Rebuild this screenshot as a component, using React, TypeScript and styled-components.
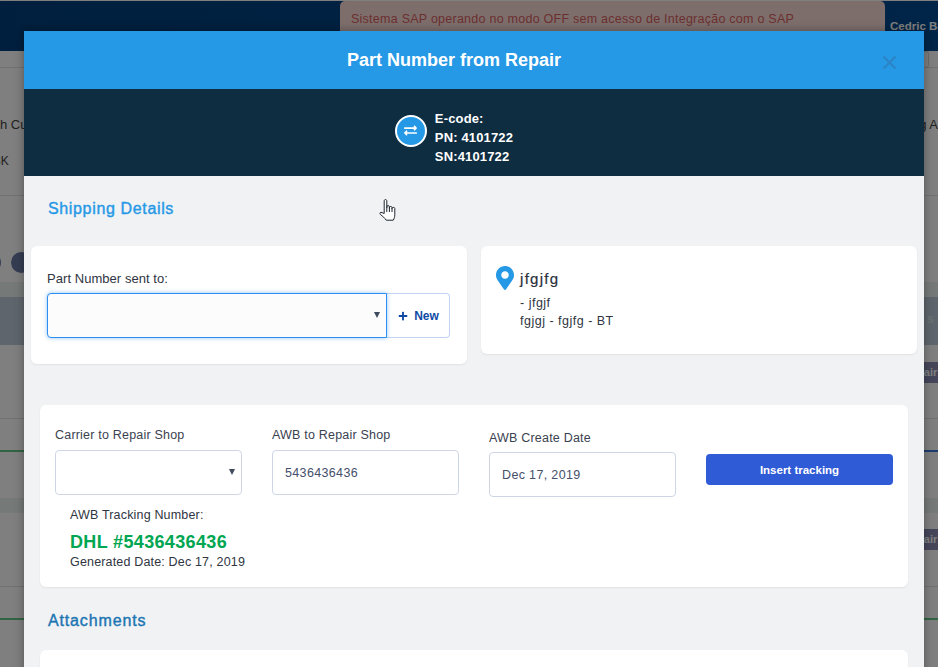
import React from 'react';
import styled, { createGlobalStyle } from 'styled-components';
import { FaExchangeAlt, FaMapMarkerAlt, FaPlus } from 'react-icons/fa';

const GlobalStyle = createGlobalStyle`
  html, body {
    margin: 0;
    padding: 0;
    height: 100%;
    overflow: hidden;
    background: #fff;
    font-family: "Liberation Sans", Arial, sans-serif;
  }
  * { box-sizing: border-box; }
`;

const App = () => {
  return (
    <Screen>
      <GlobalStyle />
      <Page>
        <TopLine />
        <TopBar>
          <SapAlert>Sistema SAP operando no modo OFF sem acesso de Integração com o SAP</SapAlert>
          <UserName>Cedric Barros</UserName>
        </TopBar>
        <SearchStrip>
          <SearchCorner />
        </SearchStrip>
        <InfoRow>
          <InfoLeft>
            <span>h Customer</span>
            <Small>3K</Small>
          </InfoLeft>
          <InfoRight>g A</InfoRight>
        </InfoRow>
        <StepRow>
          <Dot />
          <Dot />
        </StepRow>
        <Band />
        <SlateHead>
          <SlateLetter>s</SlateLetter>
        </SlateHead>
        <TableRow $height={74} $line="#e2e2e2" $weight={1}>
          <RepairTag>Repair</RepairTag>
        </TableRow>
        <TableRow $height={33} $line="#62c884" $lineRight="#3a78e0" $weight={2} />
        <TableRow $height={46} />
        <Band />
        <TableRow $height={74} $line="#e2e2e2" $weight={1} $tagTop={16}>
          <RepairTag>Repair</RepairTag>
        </TableRow>
        <TableRow $height={33} $line="#62c884" $weight={2} />
        <TableRow $height={47} />
      </Page>
      <Overlay />
      <Modal>
        <ModalHeader>
          <ModalTitle>Part Number from Repair</ModalTitle>
          <CloseIcon viewBox="0 0 15 15">
            <path d="M1.5 1.5 L13.5 13.5 M13.5 1.5 L1.5 13.5" />
          </CloseIcon>
        </ModalHeader>
        <PartBand>
          <SwapCircle>
            <FaExchangeAlt size={13} />
          </SwapCircle>
          <PartText>
            <div>E-code:</div>
            <div>PN: 4101722</div>
            <div>SN:4101722</div>
          </PartText>
        </PartBand>
        <ModalBody>
          <SectionTitle>Shipping Details</SectionTitle>
          <ShippingRow>
            <SentCard>
              <FieldLabel>Part Number sent to:</FieldLabel>
              <SelectGroup>
                <FocusSelect>
                  <Caret />
                </FocusSelect>
                <NewButton>
                  <FaPlus size={10} />
                  New
                </NewButton>
              </SelectGroup>
            </SentCard>
            <AddressCard>
              <PinColumn>
                <FaMapMarkerAlt size={24} />
              </PinColumn>
              <div>
                <AddressName>jfgjfg</AddressName>
                <AddressLine>- jfgjf</AddressLine>
                <AddressLine>fgjgj - fgjfg - BT</AddressLine>
              </div>
            </AddressCard>
          </ShippingRow>
          <TrackingCard>
            <TrackingGrid>
              <div>
                <TrackingLabel>Carrier to Repair Shop</TrackingLabel>
                <PlainSelect>
                  <Caret />
                </PlainSelect>
              </div>
              <div>
                <TrackingLabel>AWB to Repair Shop</TrackingLabel>
                <TextField readOnly value="5436436436" />
              </div>
              <DateColumn>
                <DateLabel>AWB Create Date</DateLabel>
                <TextField readOnly value="Dec 17, 2019" />
              </DateColumn>
              <ButtonColumn>
                <InsertButton>Insert tracking</InsertButton>
              </ButtonColumn>
            </TrackingGrid>
            <TrackingResult>
              <ResultLabel>AWB Tracking Number:</ResultLabel>
              <TrackingNumber>DHL #5436436436</TrackingNumber>
              <ResultLabel>Generated Date: Dec 17, 2019</ResultLabel>
            </TrackingResult>
          </TrackingCard>
          <AttachmentsTitle>Attachments</AttachmentsTitle>
          <AttachmentsCard />
        </ModalBody>
      </Modal>
      <HandCursor viewBox="0 0 18 24">
        <path d="M5.2 14.5V2c0-2 2.6-2 2.6 0v7V7.8c0-1.6 2.6-1.6 2.6 0v1.6V8.6c0-1.5 2.6-1.5 2.6 0v1.2V9.4c0-1.4 2.8-1.4 2.8 0v6.2c0 2.6-.6 3.8-1.6 5.6H7.2C6 19 3.6 17.4 1.4 15.4c-1.2-1.2.2-2.8 1.6-1.8z" />
        <path d="M7.8 9V13M10.4 9V13M13 9.5V13" />
      </HandCursor>
    </Screen>
  );
};

export default App;

const Screen = styled.div`
  position: relative;
  width: 938px;
  height: 667px;
  overflow: hidden;
`;

const Page = styled.div`
  display: flex;
  flex-direction: column;
  width: 938px;
  height: 667px;
  background: #fff;
`;

const TopLine = styled.div`
  height: 1px;
  background: #fff;
`;

const TopBar = styled.div`
  display: flex;
  height: 50px;
  background: linear-gradient(90deg, #003f7c, #004a90);
`;

const SapAlert = styled.div`
  flex: none;
  width: 545px;
  height: 50px;
  margin-left: 340px;
  padding: 11px 0 0 11px;
  background: #fbdcd8;
  border-radius: 5px 5px 0 0;
  color: #d95f5f;
  font-size: 12.5px;
  line-height: 15px;
  letter-spacing: 0.25px;
`;

const UserName = styled.div`
  flex: none;
  margin: 19px 0 0 5px;
  color: #fff;
  font-size: 11.5px;
  font-weight: 700;
  white-space: nowrap;
`;

const SearchStrip = styled.div`
  display: flex;
  justify-content: flex-end;
  height: 17px;
  border-bottom: 1px solid #e2e2e2;
`;

const SearchCorner = styled.div`
  width: 14px;
  height: 17px;
  margin-right: 9px;
  border: 1px solid #d4d4d4;
  border-radius: 3px;
`;

const InfoRow = styled.div`
  display: flex;
  justify-content: space-between;
  height: 128px;
  border-bottom: 1px solid #e2e2e2;
  color: #444;
  font-size: 13px;
  overflow: hidden;
`;

const InfoLeft = styled.div`
  display: flex;
  flex-direction: column;
  gap: 22px;
  padding-top: 49px;
  white-space: nowrap;
`;

const Small = styled.span`
  margin-left: -6px;
  font-size: 12px;
`;

const InfoRight = styled.div`
  padding-top: 49px;
  white-space: nowrap;
`;

const StepRow = styled.div`
  display: flex;
  align-items: flex-end;
  gap: 10px;
  flex: none;
  height: 86px;
  padding-bottom: 9px;
  margin-left: -20px;
`;

const Dot = styled.div`
  width: 21px;
  height: 21px;
  border-radius: 50%;
  background: #6a7aa6;
`;

const Band = styled.div`
  height: 15px;
  flex: none;
  background: #eaf2f0;
`;

const SlateHead = styled.div`
  display: flex;
  justify-content: flex-end;
  flex: none;
  height: 48px;
  background: #bccbd8;
`;

const SlateLetter = styled.span`
  margin: 14px 4px 0 0;
  color: #d9e3ea;
  font-size: 13px;
  font-weight: 700;
`;

const TableRow = styled.div<{
  $height: number;
  $line?: string;
  $lineRight?: string;
  $weight?: number;
  $tagTop?: number;
}>`
  display: flex;
  justify-content: flex-end;
  align-items: flex-start;
  flex: none;
  height: ${(p) => p.$height}px;
  padding-top: ${(p) => p.$tagTop ?? 17}px;
  border-bottom: ${(p) => p.$weight ?? 0}px solid ${(p) => p.$line ?? 'transparent'};
  border-image: ${(p) =>
    p.$lineRight
      ? `linear-gradient(90deg, ${p.$line} 50%, ${p.$lineRight} 50%) 1`
      : 'none'};
`;

const RepairTag = styled.div`
  width: 40px;
  height: 21px;
  margin-right: -1px;
  padding: 4px 0 0 4px;
  background: #8a8cb4;
  color: #fff;
  font-size: 11px;
  font-weight: 700;
  white-space: nowrap;
  overflow: hidden;
`;

const Overlay = styled.div`
  position: absolute;
  inset: 0;
  background: rgba(0, 0, 0, 0.5);
`;

const Modal = styled.div`
  position: absolute;
  top: 31px;
  left: 24px;
  width: 900px;
  height: 720px;
  background: #f1f2f4;
  box-shadow: 0 0 9px rgba(0, 0, 0, 0.35);
`;

const ModalHeader = styled.div`
  position: relative;
  display: flex;
  justify-content: center;
  align-items: center;
  height: 58px;
  padding-right: 40px;
  background: #2699e6;
`;

const ModalTitle = styled.h2`
  margin: 0;
  color: #fff;
  font-size: 18px;
  font-weight: 700;
`;

const CloseIcon = styled.svg`
  position: absolute;
  top: 24px;
  right: 27px;
  width: 15px;
  height: 15px;
  fill: none;
  stroke: #2b85c6;
  stroke-width: 2.4;
`;

const PartBand = styled.div`
  display: flex;
  justify-content: center;
  align-items: center;
  gap: 8px;
  height: 87px;
  padding-right: 40px;
  background: #0e2d41;
`;

const SwapCircle = styled.div`
  display: flex;
  justify-content: center;
  align-items: center;
  width: 32px;
  height: 32px;
  margin-bottom: 4px;
  border: 2px solid #fff;
  border-radius: 50%;
  background: #2699e6;
  color: #fff;
`;

const PartText = styled.div`
  padding-top: 10px;
  color: #fff;
  font-size: 13px;
  font-weight: 700;
  line-height: 19px;
  letter-spacing: 0.15px;
`;

const ModalBody = styled.div`
  display: flex;
  flex-direction: column;
`;

const SectionTitle = styled.h3`
  margin: 23px 0 0 24px;
  height: 20px;
  color: #2699e6;
  font-size: 16px;
  font-weight: 400;
  line-height: 20px;
  -webkit-text-stroke: 0.4px currentColor;
  letter-spacing: 0.65px;
`;

const ShippingRow = styled.div`
  display: flex;
  align-items: flex-start;
  gap: 14px;
  margin: 27px 0 0 7px;
`;

const Card = styled.div`
  background: #fff;
  border-radius: 6px;
  box-shadow: 0 1px 2px rgba(0, 0, 0, 0.07);
`;

const SentCard = styled(Card)`
  width: 436px;
  height: 118px;
  padding: 25px 16px 0;
`;

const FieldLabel = styled.div`
  height: 22px;
  color: #2f3542;
  font-size: 13px;
  line-height: 15px;
  letter-spacing: 0.05px;
`;

const SelectGroup = styled.div`
  display: flex;
  height: 45px;
`;

const FocusSelect = styled.div`
  position: relative;
  width: 340px;
  background: #fcfcfc;
  border: 1px solid #2c8ef0;
  border-radius: 4px 0 0 4px;
  box-shadow: 0 0 4px rgba(44, 142, 240, 0.5);
`;

const Caret = styled.span`
  position: absolute;
  top: 18px;
  right: 6px;
  width: 0;
  height: 0;
  border-left: 3.5px solid transparent;
  border-right: 3.5px solid transparent;
  border-top: 6px solid #3f4a5f;
`;

const NewButton = styled.div`
  display: flex;
  justify-content: center;
  align-items: center;
  gap: 6px;
  width: 63px;
  padding: 1px 0 0 1px;
  border: 1px solid #c3d4f3;
  border-left: 0;
  border-radius: 0 4px 4px 0;
  color: #0f4aa5;
  font-size: 12px;
  font-weight: 700;
`;

const AddressCard = styled(Card)`
  display: flex;
  gap: 8px;
  width: 436px;
  height: 108px;
  padding: 20px 13px 0 12px;
`;

const PinColumn = styled.div`
  width: 19px;
  color: #2699e6;
`;

const AddressName = styled.div`
  height: 23px;
  margin-top: 5px;
  color: #2a2f3a;
  font-size: 15px;
  line-height: 16px;
  letter-spacing: 1.3px;
  -webkit-text-stroke: 0.2px currentColor;
`;

const AddressLine = styled.div`
  color: #2f3542;
  font-size: 12.5px;
  line-height: 18px;
  letter-spacing: 0.5px;
`;

const TrackingCard = styled(Card)`
  width: 868px;
  height: 182px;
  margin: 41px 0 0 16px;
  padding: 22px 15px 0;
`;

const TrackingGrid = styled.div`
  display: grid;
  grid-template-columns: repeat(4, 187px);
  column-gap: 30px;
`;

const TrackingLabel = styled.div`
  height: 23px;
  color: #3b4250;
  font-size: 12.5px;
  line-height: 17px;
  letter-spacing: 0.2px;
`;

const DateLabel = styled(TrackingLabel)`
  line-height: 19px;
`;

const fieldBox = `
  display: block;
  width: 187px;
  height: 45px;
  background: #fff;
  border: 1px solid #ced6e6;
  border-radius: 4px;
`;

const PlainSelect = styled.div`
  ${fieldBox}
  position: relative;
`;

const TextField = styled.input`
  ${fieldBox}
  padding: 0 12px;
  color: #45506a;
  font-family: "Liberation Sans", Arial, sans-serif;
  font-size: 12.5px;
  letter-spacing: 0.35px;
  outline: none;
`;

const DateColumn = styled.div`
  padding-top: 2px;
`;

const ButtonColumn = styled.div`
  padding-top: 27px;
`;

const InsertButton = styled.button`
  width: 187px;
  height: 31px;
  padding: 0;
  background: #2f5bd7;
  border: 0;
  border-radius: 4px;
  color: #fff;
  font-family: "Liberation Sans", Arial, sans-serif;
  font-size: 11.5px;
  font-weight: 700;
`;

const TrackingResult = styled.div`
  display: flex;
  flex-direction: column;
  padding: 10px 0 0 15px;
`;

const ResultLabel = styled.div`
  color: #2f3542;
  font-size: 12.5px;
  line-height: 16px;
  letter-spacing: 0.17px;
`;

const TrackingNumber = styled.div`
  margin: 8px 0 1px;
  color: #00a651;
  font-size: 18px;
  font-weight: 700;
  line-height: 22px;
  letter-spacing: 0.35px;
`;

const AttachmentsTitle = styled(SectionTitle)`
  margin: 24px 0 0 24px;
  color: #1b75b2;
  letter-spacing: 0.85px;
`;

const AttachmentsCard = styled(Card)`
  width: 868px;
  height: 60px;
  margin: 19px 0 0 16px;
`;

const HandCursor = styled.svg`
  position: absolute;
  top: 199px;
  left: 379px;
  width: 18px;
  height: 24px;
  fill: #fff;
  stroke: #1e2530;
  stroke-width: 1;
`;
